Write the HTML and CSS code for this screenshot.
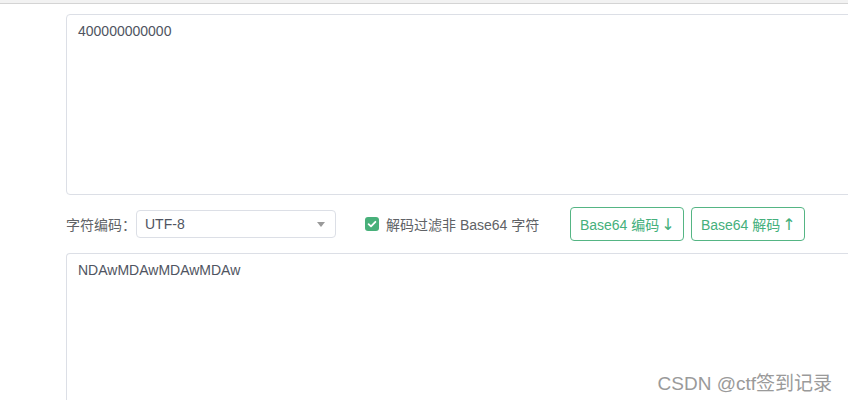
FILE: index.html
```html
<!DOCTYPE html>
<html lang="zh">
<head>
<meta charset="utf-8">
<link rel="stylesheet" href="styles.css">
</head>
<body>
<div class="topbar"></div>
<main class="page">
  <div class="area area-in">400000000000</div>
  <div class="controls">
    <label class="label">字符编码：</label>
    <div class="select"><span>UTF-8</span><span class="caret"></span></div>
    <label class="check">
      <span class="box"><svg viewBox="0 0 14 14" width="14" height="14"><path d="M3.6 7.2 L6 9.4 L10.4 4.8" fill="none" stroke="#fff" stroke-width="1.8" stroke-linecap="round" stroke-linejoin="round"/></svg></span>
      <span>解码过滤非 Base64 字符</span>
    </label>
    <div class="buttons">
      <button class="btn">Base64 编码<span class="arrow">↓</span></button>
      <button class="btn">Base64 解码<span class="arrow">↑</span></button>
    </div>
  </div>
  <div class="area area-out">NDAwMDAwMDAwMDAw</div>
</main>
<div class="watermark">CSDN @ctf签到记录</div>
</body>
</html>
```
FILE: styles.css
```css
html, body {
  margin: 0;
  padding: 0;
  background: #fff;
  overflow: hidden;
  width: 848px;
  height: 400px;
  font-family: "Liberation Sans", "Noto Sans CJK SC", sans-serif;
  color: #606266;
}
.topbar {
  height: 3px;
  background: #f2f2f2;
  border-bottom: 1px solid #d4d4d4;
}
.page {
  padding: 10px 0 0 66px;
  width: 820px;
}
.area {
  box-sizing: border-box;
  width: 820px;
  border: 1px solid #dcdfe6;
  border-radius: 4px;
  padding: 8px 11px;
  font-size: 14px;
  line-height: 16px;
  color: #4f5461;
  background: #fff;
}
.area-in {
  height: 181px;
}
.area-out {
  height: 148px;
  border-bottom-left-radius: 0;
  border-bottom-right-radius: 0;
  border-bottom-color: transparent;
}
.controls {
  display: flex;
  align-items: center;
  height: 58px;
  font-size: 14px;
}
.label {
  width: 70px;
  color: #606266;
}
.select {
  box-sizing: border-box;
  width: 200px;
  height: 28px;
  border: 1px solid #dcdfe6;
  border-radius: 4px;
  display: flex;
  align-items: center;
  justify-content: space-between;
  padding: 0 8px 0 8px;
  color: #4f5461;
  font-size: 14px;
}
.caret {
  width: 0;
  height: 0;
  border-left: 4px solid transparent;
  border-right: 4px solid transparent;
  border-top: 5px solid #9a9a9a;
  margin-right: 2px;
}
.check {
  display: flex;
  align-items: center;
  margin-left: 29px;
  gap: 7px;
  color: #606266;
}
.box {
  width: 14px;
  height: 14px;
  border-radius: 3px;
  background: #48b07a;
  display: flex;
}
.buttons {
  display: flex;
  gap: 7px;
  margin-left: 31px;
}
.btn {
  box-sizing: border-box;
  height: 34px;
  width: 114px;
  padding: 0;
  border: 1px solid #55b584;
  border-radius: 4px;
  background: #fff;
  color: #45b07c;
  font-family: "Liberation Sans", "Noto Sans CJK SC", sans-serif;
  font-size: 14px;
}
.arrow {
  font-size: 16px;
  margin-left: 2px;
  font-family: "DejaVu Sans", sans-serif;
}
.watermark {
  position: absolute;
  right: 16px;
  top: 368px;
  font-size: 19px;
  color: #9a9a9a;
  font-family: "Liberation Sans", "Noto Sans CJK SC", sans-serif;
}
```
